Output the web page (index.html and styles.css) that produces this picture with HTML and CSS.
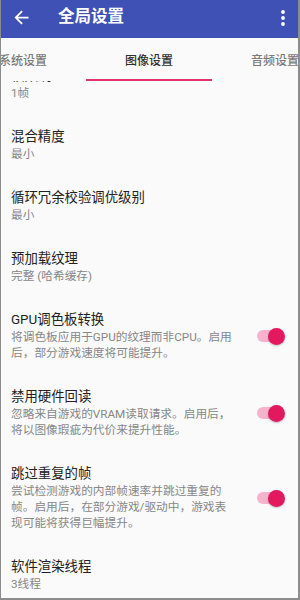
FILE: index.html
```html
<!DOCTYPE html>
<html lang="zh-CN">
<head>
<meta charset="utf-8">
<title>全局设置</title>
<link rel="stylesheet" href="styles.css">
</head>
<body>
<div class="frame">
  <header class="appbar">
    <svg class="back" viewBox="0 0 24 24" width="21" height="21" aria-hidden="true"><path d="M20 11H7.83l5.59-5.59L12 4l-8 8 8 8 1.41-1.41L7.83 13H20v-2z" fill="#fff"/></svg>
    <div class="appbar-title">全局设置</div>
    <svg class="more" viewBox="0 0 24 24" width="24" height="24" aria-hidden="true"><circle cx="12" cy="6" r="1.9" fill="#fff"/><circle cx="12" cy="12" r="1.9" fill="#fff"/><circle cx="12" cy="18" r="1.9" fill="#fff"/></svg>
  </header>
  <nav class="tabs">
    <div class="tabstrip">
      <div class="tab">系统设置</div>
      <div class="tab active">图像设置</div>
      <div class="tab">音频设置</div>
    </div>
  </nav>
  <main class="content">
    <div class="list">
      <div class="row">
        <div class="text"><div class="title">帧数跳过</div><div class="summary">1帧</div></div>
      </div>
      <div class="row">
        <div class="text"><div class="title">混合精度</div><div class="summary">最小</div></div>
      </div>
      <div class="row">
        <div class="text"><div class="title">循环冗余校验调优级别</div><div class="summary">最小</div></div>
      </div>
      <div class="row">
        <div class="text"><div class="title">预加载纹理</div><div class="summary">完整 (哈希缓存)</div></div>
      </div>
      <div class="row">
        <div class="text"><div class="title">GPU调色板转换</div><div class="summary">将调色板应用于GPU的纹理而非CPU。启用<br>后，部分游戏速度将可能提升。</div></div>
        <div class="switch on"></div>
      </div>
      <div class="row">
        <div class="text"><div class="title">禁用硬件回读</div><div class="summary">忽略来自游戏的VRAM读取请求。启用后，<br>将以图像瑕疵为代价来提升性能。</div></div>
        <div class="switch on"></div>
      </div>
      <div class="row">
        <div class="text"><div class="title">跳过重复的帧</div><div class="summary">尝试检测游戏的内部帧速率并跳过重复的<br>帧。启用后，在部分游戏/驱动中，游戏表<br>现可能将获得巨幅提升。</div></div>
        <div class="switch on"></div>
      </div>
      <div class="row">
        <div class="text"><div class="title">软件渲染线程</div><div class="summary">3线程</div></div>
      </div>
    </div>
  </main>
</div>
</body>
</html>
```

FILE: styles.css
```css
* { box-sizing: border-box; }
html, body { margin: 0; padding: 0; }
body {
  width: 300px;
  height: 600px;
  overflow: hidden;
  font-family: Roboto, "Noto Sans CJK SC", sans-serif;
  background: #fafafa;
}
.frame {
  width: 300px;
  height: 600px;
  display: flex;
  flex-direction: column;
  border-left: 1px solid #8c8c8c;
  border-right: 2px solid #8c8c8c;
  border-bottom: 2px solid #8c8c8c;
  overflow: hidden;
  background: #fafafa;
}
.appbar {
  flex: none;
  height: 38px;
  background: #3f51b5;
  display: flex;
  align-items: center;
  padding: 0 3px 4px 9.5px;
}
.back { flex: none; display: block; }
.appbar-title {
  flex: 1;
  margin-left: 26.5px;
  color: #fff;
  font-size: 16.5px;
  font-weight: 700;
  line-height: 20px;
}
.more { flex: none; display: block; margin-bottom: -2px; }
.tabs {
  flex: none;
  height: 43px;
  overflow: hidden;
  background: #fafafa;
}
.tabstrip {
  display: flex;
  margin-left: -41px;
  height: 43px;
}
.tab {
  flex: none;
  width: 126px;
  height: 43px;
  display: flex;
  align-items: center;
  justify-content: center;
  padding-top: 2px;
  font-size: 12px;
  font-weight: 500;
  color: #7a7a7a;
  border-bottom: 2px solid transparent;
}
.tab.active {
  color: #303030;
  border-bottom-color: #e2336f;
}
.content {
  flex: 1;
  overflow: hidden;
}
.list {
  margin-top: -27px;
}
.row {
  display: flex;
  align-items: center;
  padding: 13px 13px 14px 10px;
}
.text {
  flex: 1;
  min-width: 0;
  margin-right: 21px;
}
.title {
  font-size: 13.4px;
  line-height: 18px;
  color: #222;
  white-space: nowrap;
}
.summary {
  font-size: 11.7px;
  line-height: 16px;
  color: #878787;
  white-space: nowrap;
}
.switch {
  flex: none;
  position: relative;
  width: 28px;
  height: 18px;
}
.switch::before {
  content: "";
  position: absolute;
  left: 0;
  top: 3px;
  width: 25px;
  height: 12px;
  border-radius: 6px;
  background: #f6b3cb;
}
.switch::after {
  content: "";
  position: absolute;
  right: 0;
  top: 0.5px;
  width: 17px;
  height: 17px;
  border-radius: 50%;
  background: #e3195f;
  box-shadow: 0 1px 2px rgba(0,0,0,0.25);
}
```
